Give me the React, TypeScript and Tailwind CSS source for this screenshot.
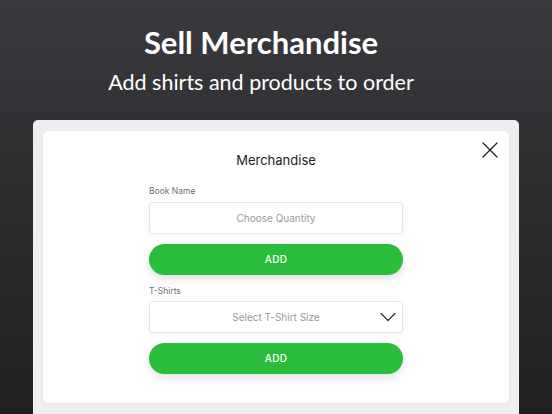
import { ChevronDown, X } from "lucide-react";

function Label({ children }: { children: string }) {
  return <div className="text-[8.5px] leading-[12px] text-[#707070]">{children}</div>;
}

function AddButton() {
  return (
    <button className="h-[31px] w-full rounded-full bg-[#29bd3b] text-[10px] font-medium tracking-wide text-white shadow-[0_4px_8px_rgba(0,0,0,0.12)]">
      ADD
    </button>
  );
}

export default function App() {
  return (
    <div className="flex h-[414px] w-full flex-col items-center overflow-hidden bg-gradient-to-b from-[#3a3a3e] to-[#202022] font-['Lato',sans-serif]">
      {/* header sits a touch left of the panel's centre in the shot */}
      <div className="mr-[30px] flex flex-col items-center">
        <h1 className="mt-[23px] text-[31px] font-bold leading-[38px] text-white">Sell Merchandise</h1>
        <p className="mt-[7px] text-[21.5px] leading-[28px] text-white">Add shirts and products to order</p>
      </div>

      <div className="mt-[24px] w-[486px] flex-1 rounded-t-[5px] bg-[#eceeef] px-[10px] pt-[11px]">
        <div className="relative h-[272px] rounded-[5px] bg-white font-['Inter',sans-serif] shadow-[0_1px_3px_rgba(0,0,0,0.05)]">
          <X className="absolute right-[5px] top-[5px] h-[28px] w-[28px] text-[#222]" strokeWidth={1.1} />
          <div className="pt-[19px] text-center text-[13px] leading-[20px] text-[#222]">Merchandise</div>

          <div className="mx-auto mt-[15px] flex w-[254px] flex-col">
            <Label>Book Name</Label>
            <div className="mt-[5px] flex h-[32px] items-center justify-center rounded-[4px] border border-[#e6e6e6] bg-white text-[10px] text-[#9a9a9a] shadow-[0_2px_6px_rgba(0,0,0,0.05)]">
              Choose Quantity
            </div>
            <div className="mt-[10px]">
              <AddButton />
            </div>

            <div className="mt-[10px]">
              <Label>T-Shirts</Label>
            </div>
            <div className="relative mt-[4px] flex h-[32px] items-center justify-center rounded-[4px] border border-[#e6e6e6] bg-white text-[10px] text-[#9a9a9a] shadow-[0_2px_6px_rgba(0,0,0,0.05)]">
              Select T-Shirt Size
              <ChevronDown className="absolute right-0 top-1/2 h-[28px] w-[28px] -translate-y-1/2 text-[#333]" strokeWidth={1.1} />
            </div>
            <div className="mt-[10px]">
              <AddButton />
            </div>
          </div>
        </div>
      </div>
    </div>
  );
}
